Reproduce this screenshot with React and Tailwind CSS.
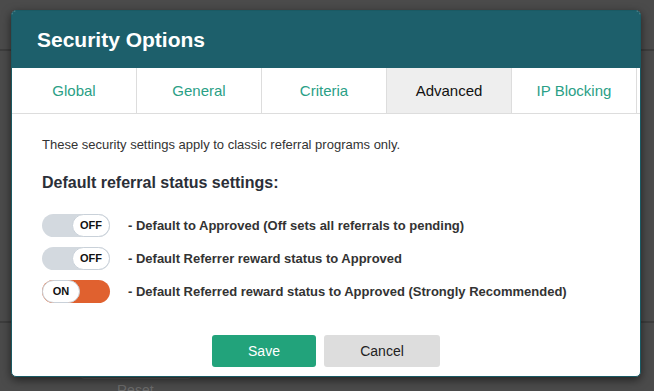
import React from 'react';

const tabs = ['Global', 'General', 'Criteria', 'Advanced', 'IP Blocking'];

const settings = [
    { on: false, label: '- Default to Approved (Off sets all referrals to pending)' },
    { on: false, label: '- Default Referrer reward status to Approved' },
    { on: true, label: '- Default Referred reward status to Approved (Strongly Recommended)' },
];

const Toggle = ({ on }) => (
    <div
        className={`w-[68px] h-[23px] rounded-full flex items-stretch flex-shrink-0 ${on ? 'bg-[#e0612f] justify-start' : 'bg-[#d3d9df] justify-end'}`}
    >
        <div className="w-[38px] rounded-full bg-white border border-[#c9d1d9] flex items-center justify-center text-[11px] font-bold text-[#111]">
            {on ? 'ON' : 'OFF'}
        </div>
    </div>
);

const App = () => {
    return (
        <div className="relative w-[654px] h-[391px] overflow-hidden bg-[#4b4b4b] font-['Liberation_Sans',Arial,sans-serif]">
            {/* Page behind the overlay */}
            <div className="h-[51px] border-b-2 border-[#3d3d3d]" />
            <div className="h-[272px] border-b-2 border-[#3d3d3d]" />
            <div className="pl-[81px] pt-[36px]">
                <div className="w-[110px] h-[20px] rounded-b-[3px] border border-[#5a5a5a]" />
                <div className="pl-[36px] pt-[4px] text-[14px] leading-none text-[#6a6a6a]">Reset</div>
            </div>

            {/* Dialog */}
            <div className="absolute left-[11px] top-[10px] w-[630px] bg-white border border-[#1a5a64] rounded-[5px] overflow-hidden shadow-[0_3px_10px_rgba(0,0,0,0.55)]">
                {/* Header */}
                <div className="h-[57px] bg-[#1d5f6b] flex items-center pl-[25px]">
                    <h2 className="text-[21px] font-bold text-white leading-none">Security Options</h2>
                </div>

                {/* Tabs */}
                <div className="flex h-[46px] border-b border-[#dddddd]">
                    {tabs.map((tab) => (
                        <div
                            key={tab}
                            className={`w-[125px] flex items-center justify-center border-r border-[#dddddd] text-[15px] pt-[2px] ${tab === 'Advanced' ? 'bg-[#eeeeee] text-[#111]' : 'bg-white text-[#2aa086]'}`}
                        >
                            {tab}
                        </div>
                    ))}
                </div>

                {/* Body */}
                <div className="pl-[30px] pt-[23px] pb-[9px]">
                    <p className="text-[13px] leading-[16px] text-[#333]">
                        These security settings apply to classic referral programs only.
                    </p>
                    <h3 className="mt-[20px] text-[16px] leading-[20px] font-bold text-[#2b2f38]">
                        Default referral status settings:
                    </h3>
                    <div className="mt-[21px] flex flex-col gap-[10px]">
                        {settings.map((s, i) => (
                            <div key={i} className="flex items-center gap-[18px]">
                                <Toggle on={s.on} />
                                <span className="text-[13px] font-bold text-[#333]">{s.label}</span>
                            </div>
                        ))}
                    </div>

                    {/* Footer */}
                    <div className="mt-[32px] -ml-[30px] flex justify-center gap-[8px]">
                        <button className="w-[104px] h-[32px] rounded-[3px] bg-[#22a37b] text-white text-[14px]">
                            Save
                        </button>
                        <button className="w-[116px] h-[32px] rounded-[3px] bg-[#dddddd] text-[#222] text-[14px]">
                            Cancel
                        </button>
                    </div>
                </div>
            </div>
        </div>
    );
};

export default App;
